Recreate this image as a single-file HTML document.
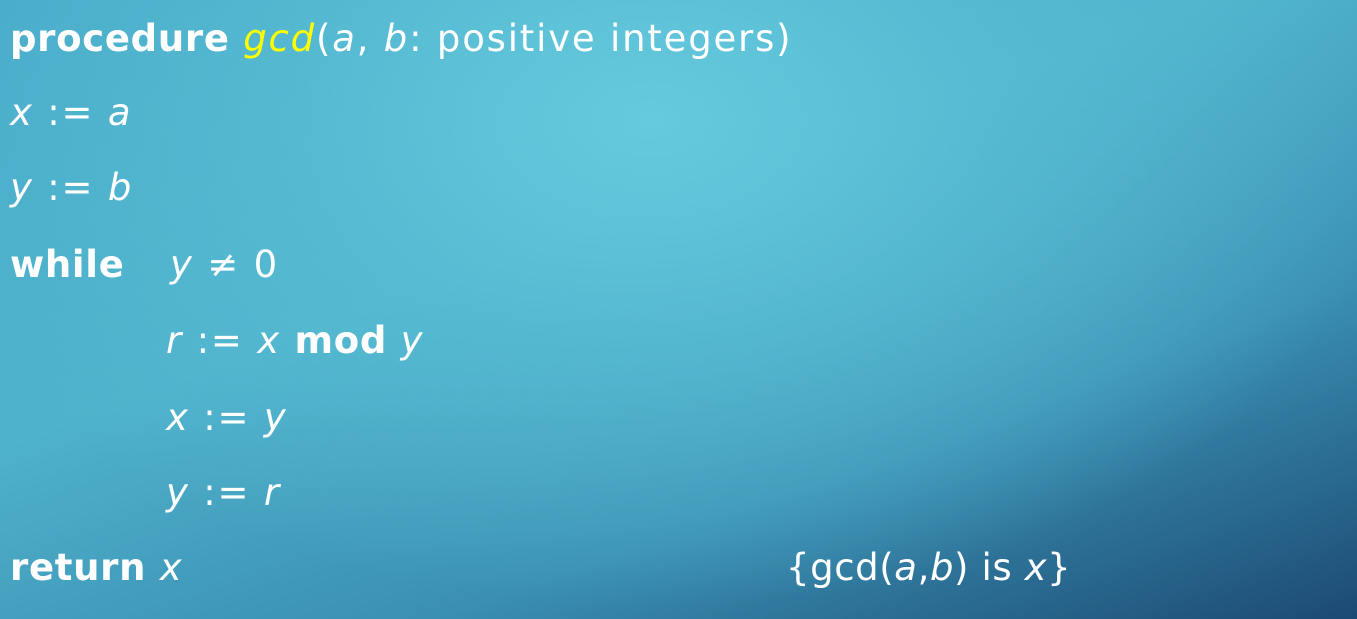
<!DOCTYPE html>
<html><head><meta charset="utf-8"><style>
html,body{margin:0;padding:0}
body{width:1357px;height:619px;overflow:hidden;position:relative;
background:
radial-gradient(ellipse 1000px 650px at 650px 120px,rgba(102,202,222,1) 0%,rgba(88,188,212,0.8) 35%,rgba(70,160,195,0) 75%),
linear-gradient(160deg,#48aac8 0%,#4fb2cc 40%,#3a8fb2 70%,#1c4a74 100%);
font-family:"DejaVu Sans","Liberation Sans",sans-serif;color:#fff;font-size:37px}
.l{position:absolute;white-space:nowrap;line-height:1;letter-spacing:1.8px}
b{font-weight:bold;letter-spacing:0.7px}
i{font-style:oblique}
.y{color:#ffff00}
</style></head><body>
<div class="l" style="left:10px;top:20px"><b>procedure</b> <i class="y">gcd</i>(<i>a</i>, <i>b</i>: positive integers)</div>
<div class="l" style="left:10px;top:94px"><i>x</i> := <i>a</i></div>
<div class="l" style="left:10px;top:169px"><i>y</i> := <i>b</i></div>
<div class="l" style="left:10px;top:246px"><b>while</b></div>
<div class="l" style="left:170px;top:246px"><i>y</i> ≠ 0</div>
<div class="l" style="left:166px;top:322px"><i>r</i> := <i>x</i> <b>mod</b> <i>y</i></div>
<div class="l" style="left:166px;top:399px"><i>x</i> := <i>y</i></div>
<div class="l" style="left:166px;top:474px"><i>y</i> := <i>r</i></div>
<div class="l" style="left:10px;top:549px"><b>return</b> <i>x</i></div>
<div class="l" style="left:786px;top:549px;letter-spacing:0.6px">{gcd(<i>a</i>,<i>b</i>) is <i>x</i>}</div>
</body></html>
